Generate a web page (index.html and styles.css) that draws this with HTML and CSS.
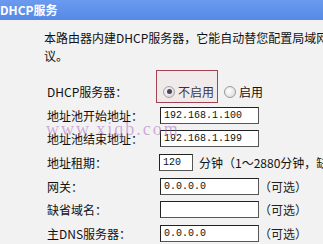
FILE: index.html
```html
<!DOCTYPE html>
<html lang="zh-CN">
<head>
    <meta charset="UTF-8">
    <title>DHCP服务</title>
    <link rel="stylesheet" href="styles.css">
</head>
<body>
    <div class="title-bar">DHCP服务</div>

    <div class="content">
        <p class="intro">本路由器内建DHCP服务器，它能自动替您配置局域网中各计算机的TCP/IP协<br>议。</p>

        <div class="form">
            <div class="label">DHCP服务器：</div>
            <div class="field">
                <label class="radio-opt"><span class="radio checked"></span>不启用</label>
                <label class="radio-opt"><span class="radio"></span>启用</label>
            </div>

            <div class="label">地址池开始地址：</div>
            <div class="field"><span class="input">192.168.1.100</span></div>

            <div class="label">地址池结束地址：</div>
            <div class="field"><span class="input">192.168.1.199</span></div>

            <div class="label">地址租期：</div>
            <div class="field"><span class="input short">120</span><span class="hint">分钟（1～2880分钟，缺省为120分钟）</span></div>

            <div class="label">网关：</div>
            <div class="field"><span class="input">0.0.0.0</span><span class="opt">（可选）</span></div>

            <div class="label">缺省域名：</div>
            <div class="field"><span class="input"></span><span class="opt">（可选）</span></div>

            <div class="label">主DNS服务器：</div>
            <div class="field"><span class="input">0.0.0.0</span><span class="opt">（可选）</span></div>
        </div>

        <!-- annotation + watermark sit over the form -->
        <div class="mark-box"></div>
        <div class="watermark">www.xiqb.com</div>
    </div>
</body>
</html>
```

FILE: styles.css
```css
body {
    margin: 0;
    background: #f2f2f2;
    font-family: "Noto Sans CJK SC", "Liberation Sans", sans-serif;
    font-size: 12px;
    color: #111;
    overflow: hidden;
    width: 323px;
    height: 244px;
}

/* Title bar */
.title-bar {
    height: 20px;
    line-height: 20px;
    background: linear-gradient(#6a9bef, #5589e6);
    color: #fff;
    font-weight: bold;
    white-space: nowrap;
}

.content {
    position: relative;
}

.intro {
    margin: 0;
    padding: 9px 0 0 44px;
    line-height: 18px;
    white-space: nowrap;
}

/* Form */
.form {
    display: grid;
    grid-template-columns: 113px auto;
    grid-auto-rows: 23.6px;
    padding: 15px 0 0 47px;
}
.label,
.field {
    display: flex;
    align-items: center;
    white-space: nowrap;
}

.input {
    box-sizing: border-box;
    display: inline-block;
    width: 99px;
    height: 17px;
    line-height: 15px;
    background: #fff;
    border: 1px solid #555;
    border-top-color: #222;
    border-left-color: #222;
    padding-left: 3px;
    font-family: "Liberation Mono", monospace;
    font-size: 10px;
    color: #111;
}
.input.short {
    width: 34px;
    margin-left: -1px;
}
.hint {
    margin-left: 6px;
}
.opt {
    color: #222;
}

/* Radios */
.radio-opt {
    display: inline-flex;
    align-items: center;
    margin-left: 3px;
    margin-right: 7px;
}
.radio {
    box-sizing: border-box;
    width: 12px;
    height: 12px;
    border-radius: 50%;
    border: 1px solid #9a9a9a;
    background: radial-gradient(circle at 40% 40%, #fff, #d6d6d6);
    margin-right: 3px;
    position: relative;
}
.radio.checked::after {
    content: "";
    position: absolute;
    left: 2.5px;
    top: 2.5px;
    width: 5px;
    height: 5px;
    border-radius: 50%;
    background: #1e2a4a;
}

/* Red annotation around the selected option */
.mark-box {
    position: absolute;
    left: 156px;
    top: 50px;
    width: 62px;
    height: 33px;
    box-sizing: border-box;
    border: 1px solid #a04454;
    background: rgba(240, 200, 205, 0.18);
    pointer-events: none;
}

.watermark {
    position: absolute;
    left: 46px;
    top: 99px;
    font-family: "Liberation Serif", serif;
    font-size: 18px;
    letter-spacing: 2px;
    color: rgba(160, 80, 185, 0.45);
    pointer-events: none;
}
```
